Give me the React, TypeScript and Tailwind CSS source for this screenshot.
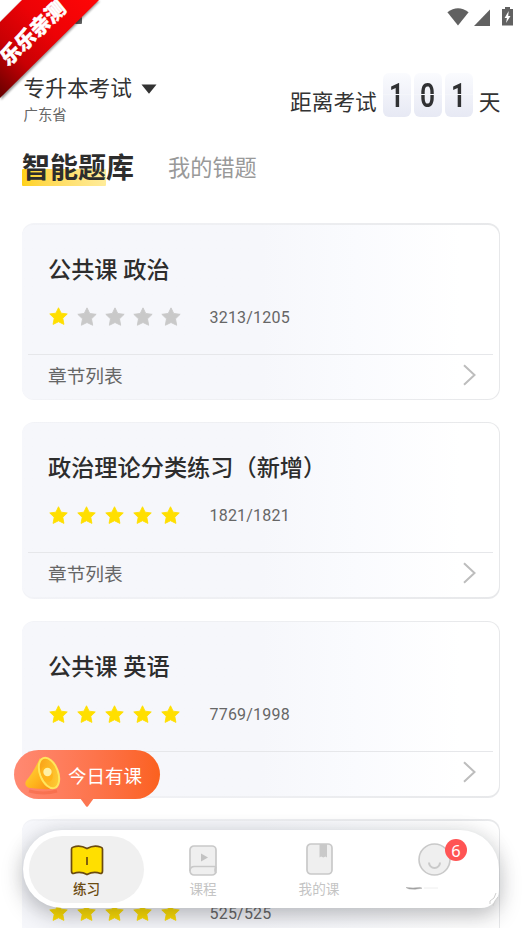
import { clsx } from 'clsx';

type Course = {
    title: string;
    stars: number;
    progress: string;
};

const courses: Course[] = [
    { title: '公共课 政治', stars: 1, progress: '3213/1205' },
    { title: '政治理论分类练习（新增）', stars: 5, progress: '1821/1821' },
    { title: '公共课 英语', stars: 5, progress: '7769/1998' },
    { title: '', stars: 5, progress: '525/525' },
];

const Star = ({ active }: { active: boolean }) => (
    <svg
        viewBox="0 0 24 24"
        className={clsx(active ? 'size-[21px] text-[#ffdf00]' : 'size-[22px] text-[#c9c9c9]')}
    >
        <path
            d="M12 2 15 8.200l7 .9-5.100 4.900 1.300 7L12 18l-6.200 3 1.300-7L2 9.100l7-.9z"
            fill="currentColor"
            stroke="currentColor"
            strokeWidth="1"
            strokeLinejoin="round"
        />
    </svg>
);

const StatusBar = () => (
    <div className="flex h-[33px] items-start justify-end pr-[9px] pt-2 text-[#616161]">
        <svg className="mr-1 h-[18px] w-6" viewBox="0 0 24 18" fill="currentColor">
            <path d="M1.4 4.3Q12-3.8 22.6 4.3L12 17.6z" />
        </svg>
        <svg className="mr-3 h-[18px] w-4" viewBox="0 0 16 18" fill="currentColor">
            <path d="M16 1.5V18H0z" />
        </svg>
        <svg className="-mt-px h-[19px] w-[11px]" viewBox="0 0 11 19">
            <path d="M3 0h5v2h3v16.5H0V2h3z" fill="currentColor" />
            <path d="M6.7 4 2.6 11h2.3l-.8 5 4.4-7H6.2z" fill="#fff" />
        </svg>
    </div>
);

const Ribbon = () => (
    <div className="absolute left-0 top-0 size-[104px]">
        <svg className="size-full" viewBox="0 0 104 104">
            <defs>
                <linearGradient id="ribbon" x1="1" y1="0" x2="0" y2="1">
                    <stop offset="0" stopColor="#ff0606" />
                    <stop offset="0.4" stopColor="#ed0206" />
                    <stop offset="0.7" stopColor="#c80004" />
                    <stop offset="1" stopColor="#650000" />
                </linearGradient>
                <filter id="ribbonShadow">
                    <feGaussianBlur stdDeviation="1.3" />
                </filter>
            </defs>
            <path d="M22 1h78L1 100 0 23z" fill="#000" opacity="0.4" filter="url(#ribbonShadow)" />
            <path d="M22 0h77L0 98V22z" fill="url(#ribbon)" />
        </svg>
        <span className="absolute -left-[10px] top-[19px] w-[86px] -rotate-[44deg] -skew-x-[5deg] text-center text-[20.500px] font-black leading-[28px] text-white [-webkit-text-stroke:0.5px_white]">
            乐乐亲测
        </span>
    </div>
);

const Digit = ({ value }: { value: string }) => (
    <div className="relative flex h-[44px] w-7 items-center justify-center rounded-md bg-linear-to-b from-[#fafbfe] to-[#e7e9f4] text-[33px] font-semibold text-[#303133] [font-family:Roboto,sans-serif]">
        <span className="mt-0.5 scale-x-[0.8]">{value}</span>
        <span className="absolute inset-x-0 top-[21px] h-px bg-[#f4f5fa]" />
    </div>
);

const Header = () => (
    <header className="flex h-[98px] justify-between pl-[23.500px] pr-[21.500px]">
        <div className="pt-[41px]">
            <div className="flex items-center gap-[9px] text-[21.700px] leading-[30px] text-[#333]">
                专升本考试
                <svg className="h-2.5 w-4" viewBox="0 0 16 10">
                    <path d="M.5.5h15L8 9.8z" fill="#333" />
                </svg>
            </div>
            <p className="mt-[2px] text-[14.4px] leading-[20px] text-[#666]">广东省</p>
        </div>
        <div className="mt-[40px] flex h-[44px] text-[21.700px] leading-[60px] text-[#333]">
            距离考试
            <div className="ml-1.5 mr-1.5 flex gap-[3px]">
                <Digit value="1" />
                <Digit value="0" />
                <Digit value="1" />
            </div>
            天
        </div>
    </header>
);

const CourseCard = ({ title, stars, progress }: Course) => (
    <li className="flex h-[177px] flex-col rounded-[12px] bg-linear-to-r from-[#f2f3f7] via-[#eeeff2] to-[#e7e8ea] py-[1.500px] pr-[1.500px]">
        <div className="flex flex-1 flex-col rounded-[11px] bg-linear-to-r from-[#f6f7fb] from-50% via-[#fafbfe] via-70% to-white to-92%">
            <h2 className="mt-[28px] h-[34px] pl-[26px] text-[23.200px] font-medium leading-[34px] text-[#2d2d2d]">
                {title}
            </h2>
            <div className="mt-[19px] flex h-[22px] items-center pl-[22.500px]">
                <div className="flex w-[165px]">
                    {[1, 2, 3, 4, 5].map((n) => (
                        <span key={n} className="flex w-7 justify-center">
                            <Star active={n <= stars} />
                        </span>
                    ))}
                </div>
                <span className="mt-0.5 text-[16px] leading-[22px] tracking-[0.2px] text-[#666] [font-family:Roboto,sans-serif]">
                    {progress}
                </span>
            </div>
            <div className="mx-[6px] mt-auto flex h-[45px] items-center justify-between border-t border-[#e6e7ea] pl-5 pr-[17px]">
                <span className="text-[18.7px] leading-[26px] text-[#666]">章节列表</span>
                <svg className="-mt-1 h-[22px] w-[13px]" viewBox="0 0 13 22">
                    <path d="M1 1.2 11.5 11 1 20.8" fill="none" stroke="#bdbdbd" strokeWidth="2" />
                </svg>
            </div>
        </div>
    </li>
);

const ClassBubble = () => (
    <div className="absolute left-[14px] top-[750px] flex h-[49px] w-[146px] items-center rounded-full bg-linear-to-r from-[#ff8972] to-[#fb611e] pl-[10px]">
        <svg className="h-10 w-11" viewBox="0 0 44 40">
            <defs>
                <linearGradient id="horn" x1="0" y1="0" x2="1" y2="1">
                    <stop offset="0" stopColor="#ffdd48" />
                    <stop offset="0.55" stopColor="#ffb51c" />
                    <stop offset="1" stopColor="#f98617" />
                </linearGradient>
                <linearGradient id="bell" x1="0" y1="0" x2="1" y2="1">
                    <stop offset="0" stopColor="#f99a10" />
                    <stop offset="1" stopColor="#ffd43c" />
                </linearGradient>
            </defs>
            <path d="M5 36Q20 40 33 36" fill="none" stroke="#f05b35" strokeWidth="3" opacity="0.4" />
            <path d="M16 3Q9 18 2 26c-2 4 1 7 5 7 10 1 17 2 24 0z" fill="url(#horn)" />
            <ellipse cx="25" cy="18" rx="9" ry="16" transform="rotate(-21 25 18)" fill="url(#bell)" stroke="#ffe65c" strokeWidth="2" />
            <ellipse cx="23" cy="19" rx="5.500" ry="8" transform="rotate(-21 23 19)" fill="#ffb41a" />
            <circle cx="23.500" cy="17" r="4.200" fill="#fff0a4" />
        </svg>
        <span className="mt-1 text-[18.500px] leading-[28px] text-white">今日有课</span>
        <svg className="absolute left-[66px] top-[48px] h-[9px] w-[14px]" viewBox="0 0 14 9">
            <path d="M0 0h14L8 8.2q-1 1-2 0z" fill="#fc7651" />
        </svg>
    </div>
);

const PracticeIcon = () => (
    <svg className="h-[31px] w-[34px]" viewBox="0 0 34 31">
        <path
            d="M17 3.500Q10-.5 3.500 2 1.500 2.500 1.500 4v22q0 2.500 2 2.500 7-2.500 13.500 1 6.500-3.500 13.500-1 2 0 2-2.500V4q0-1.500-2-2Q24-.5 17 3.500z"
            fill="#ffdf00"
            stroke="#6b4b10"
            strokeWidth="1.7"
        />
        <path d="M17 12v8" stroke="#6b4b10" strokeWidth="1.7" />
    </svg>
);

const CourseIcon = () => (
    <svg className="h-[31px] w-[28px]" viewBox="0 0 28 31" fill="#efefef" stroke="#c9c9c9" strokeWidth="1.7">
        <rect x="1" y="1" width="26" height="29" rx="4" />
        <path d="M1 26q0-4.500 4.500-4.500H27M27 28.500q-2-3.500 0-7" fill="none" />
        <path d="m12 8.500 7 4-7 4z" fill="#c2c2c2" stroke="none" />
    </svg>
);

const MyCourseIcon = () => (
    <svg className="h-[32px] w-[27px]" viewBox="0 0 27 32">
        <rect x="1" y="1" width="25" height="30" rx="4" fill="#efefef" stroke="#c9c9c9" strokeWidth="1.7" />
        <path d="M13.500 1h7.500v13.500l-1.500-1-2.200 1-2.200-1-1.600 1z" fill="#c9c9c9" />
    </svg>
);

const ProfileIcon = () => (
    <svg className="size-[33px]" viewBox="0 0 33 33" stroke="#c9c9c9" strokeWidth="1.6">
        <circle cx="16.500" cy="16.500" r="15.500" fill="#efefef" />
        <path d="M11 19.500a5.500 5.500 0 0 0 11 0" fill="none" strokeWidth="2" />
    </svg>
);

const BottomNav = () => (
    <nav className="absolute left-[23px] top-[830px] flex h-[78px] w-[476px] rounded-l-[39px] rounded-br-[18px] rounded-tr-[39px] bg-white p-[6px] text-[13.600px] leading-[18px] text-[#c4c4c4] shadow-[0_8px_22px_rgba(30,32,40,0.26),0_0_20px_rgba(30,32,40,0.08)]">
        <div className="flex h-[67px] w-[115px] flex-col items-center rounded-full bg-[#f0f0f0] pt-[9px] font-medium text-[#6b4b10]">
            <PracticeIcon />
            <span className="mt-[4px]">练习</span>
        </div>
        <div className="flex w-[118px] flex-col items-center pt-[9px]">
            <CourseIcon />
            <span className="mt-[4px]">课程</span>
        </div>
        <div className="flex w-[114px] flex-col items-center pt-[7px]">
            <MyCourseIcon />
            <span className="mt-[5px]">我的课</span>
        </div>
        <div className="relative flex w-[116px] flex-col items-center pt-[7px]">
            <ProfileIcon />
            <span className="absolute left-[69px] top-[3px] flex size-[22px] items-center justify-center rounded-full bg-[#ff5454] pt-px text-[16.500px] text-white [font-family:'Noto_Sans',sans-serif]">
                6
            </span>
            <svg className="mr-[22px] mt-[9px] h-1.5 w-9" viewBox="0 0 36 6">
                <path d="M1 2.500 8 3l7-.6 2 .8-7 1-6-.3z" fill="#929292" stroke="#b5b5b5" strokeWidth=".6" />
                <path d="M19 3h14" stroke="#eee" />
            </svg>
        </div>
        <svg className="absolute bottom-0 right-0 h-4 w-3" viewBox="0 0 12 16" fill="none" stroke="#cfcfcf">
            <path d="M9 1Q8 7 3 9v3M11 5Q7 9 6 14" />
        </svg>
    </nav>
);

export default function App() {
    return (
        <div className="relative h-[928px] w-[522px] overflow-hidden bg-white [font-family:Roboto,'Noto_Sans_CJK_SC',sans-serif]">
            <StatusBar />
            <Header />
            <div className="flex h-[92.400px] items-start gap-[34px] pl-[22px] pt-[17px]">
                <h1 className="relative text-[28px] font-bold leading-[42px] text-[#2d2d2d]">
                    <span className="absolute left-0 top-[21px] h-[17px] w-[84px] rounded-[1px] bg-linear-to-r from-[#ffd216] to-[#ffec9a]" />
                    <span className="relative">智能题库</span>
                </h1>
                <span className="text-[22.200px] leading-[40px] text-[#999]">我的错题</span>
            </div>
            <ul className="flex flex-col gap-[21.600px] px-[22px]">
                {courses.map((course) => (
                    <CourseCard key={course.progress} {...course} />
                ))}
            </ul>
            <BottomNav />
            <ClassBubble />
            <span className="absolute left-[75px] top-[17px] h-[7px] w-[7px] rounded-[1px] bg-[#616161]" />
            <Ribbon />
        </div>
    );
}
